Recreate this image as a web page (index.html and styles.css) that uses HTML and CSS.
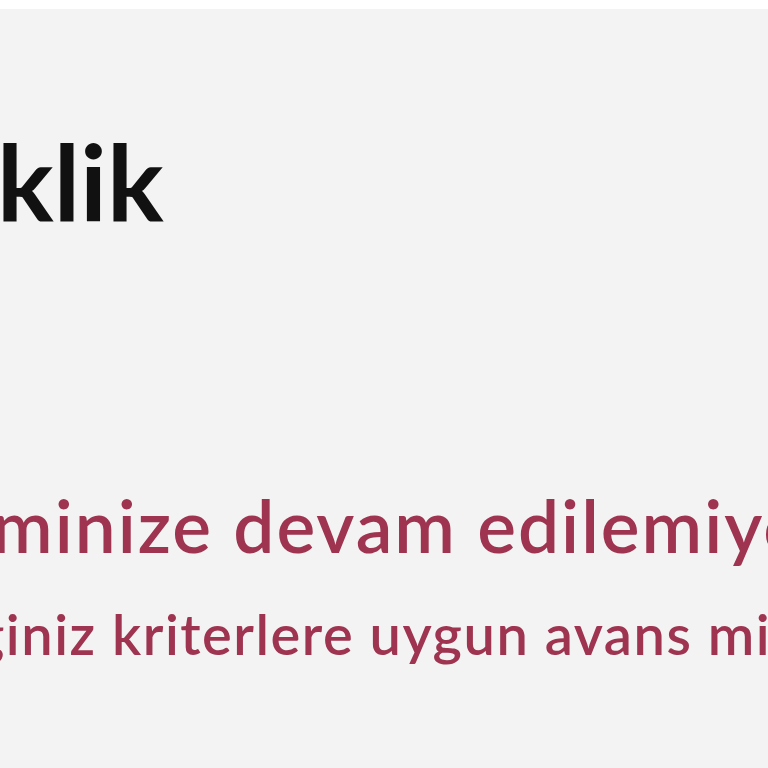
FILE: index.html
```html
<!DOCTYPE html>
<html lang="tr">
<head>
<meta charset="utf-8">
<link rel="stylesheet" href="styles.css">
</head>
<body>
<div class="topbar"></div>
<main class="panel">
  <h1 class="title">klik</h1>
  <div class="message">
    <p class="msg-head">minize devam edilemiyor</p>
    <p class="msg-body">ğiniz kriterlere uygun avans miktarı</p>
  </div>
</main>
</body>
</html>
```
FILE: styles.css
```css
html, body {
  margin: 0;
  padding: 0;
  background: #ffffff;
  overflow: hidden;
}
body {
  font-family: Lato, "Open Sans", sans-serif;
  width: 768px;
  height: 768px;
}
.topbar {
  height: 9px;
  background: #ffffff;
}
.panel {
  background: #f3f3f3;
  height: 759px;
  padding-top: 111px;
  box-sizing: border-box;
  overflow: hidden;
  white-space: nowrap;
}
.title {
  margin: 0 0 0 -3px;
  font-size: 106px;
  line-height: 120px;
  font-weight: 700;
  color: #111111;
}
.message {
  margin-top: 240px;
  color: #9e3450;
}
.msg-head {
  margin: 0 0 0 -8px;
  font-size: 73px;
  line-height: 90px;
  font-weight: 600;
  letter-spacing: 2px;
}
.msg-body {
  margin: 32px 0 0 -25px;
  font-size: 56px;
  line-height: 64px;
  font-weight: 600;
  letter-spacing: 1.5px;
}
```
